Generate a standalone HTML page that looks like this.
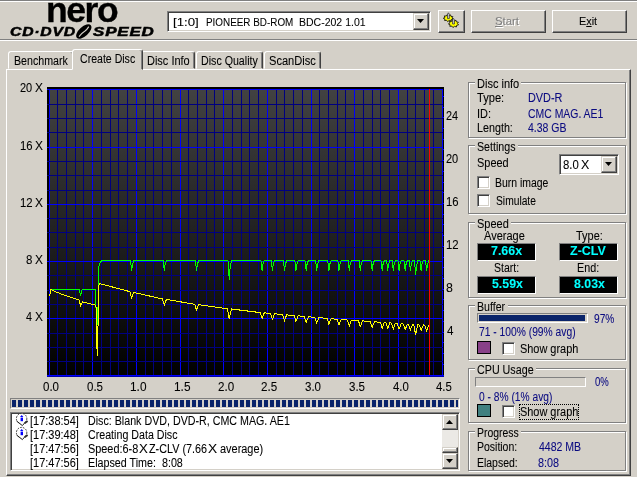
<!DOCTYPE html>
<html><head><meta charset="utf-8"><title>Nero CD-DVD Speed</title>
<style>
html,body{margin:0;padding:0}
body{width:637px;height:477px;overflow:hidden;background:#d4d0c8;position:relative;font-family:"Liberation Sans",sans-serif;font-size:12px;color:#000}
#root{position:absolute;left:0;top:0;width:637px;height:477px;will-change:transform}
.abs{position:absolute;box-sizing:border-box}
.t{position:absolute;white-space:nowrap;line-height:14px;height:14px;transform-origin:0 50%;-webkit-text-stroke:.08px currentColor}
.hl{height:1px}
.grp{border:1px solid #808080;box-shadow:1px 1px 0 #fff, inset 1px 1px 0 #fff}
.btn{border:1px solid;border-color:#fff #404040 #404040 #fff;box-shadow:inset -1px -1px 0 #808080, inset 1px 1px 0 #d4d0c8;background:#d4d0c8}
.sbtn{border:1px solid;border-color:#d4d0c8 #404040 #404040 #d4d0c8;box-shadow:inset -1px -1px 0 #808080, inset 1px 1px 0 #fff;background:#d4d0c8}
.sunk{border:1px solid;border-color:#808080 #fff #fff #808080;box-shadow:inset 1px 1px 0 #404040, inset -1px -1px 0 #d4d0c8;background:#fff}
.led{background:#000;border:1px solid;border-color:#808080 #fff #fff #808080}
.chk{width:13px;height:13px;border:1px solid;border-color:#808080 #fff #fff #808080;box-shadow:inset 1px 1px 0 #404040, inset -1px -1px 0 #d4d0c8;background:#fff}
.tab{border:1px solid;border-color:#fff #404040 transparent #fff;border-radius:3px 3px 0 0;box-shadow:inset -1px 0 0 #808080;background:#d4d0c8}
</style></head><body><div id="root">
<!-- top etched lines -->
<div class="abs hl" style="left:0;top:0;width:637px;background:#808080"></div>
<div class="abs hl" style="left:0;top:1px;width:637px;background:#fff"></div>
<div class="abs hl" style="left:0;top:39px;width:637px;background:#808080"></div>
<div class="abs hl" style="left:0;top:40px;width:637px;background:#fff"></div>

<!-- logo -->
<div class="abs" id="nero" style="left:45.8px;top:-6.5px;height:32px;font-weight:bold;font-size:34.5px;line-height:32px;letter-spacing:-1.4px;white-space:nowrap;-webkit-text-stroke:.3px #000;transform:scaleX(1.03);transform-origin:0 50%">nero</div>
<div class="abs" id="cds1" style="left:9.5px;top:25px;height:14px;font-weight:bold;font-style:italic;font-size:12px;line-height:14px;white-space:nowrap;transform-origin:0 50%;transform:scaleX(1.31);letter-spacing:.6px;-webkit-text-stroke:.5px #000">CD·DVD</div>
<div class="abs" id="cds2" style="left:92.5px;top:25px;height:14px;font-weight:bold;font-style:italic;font-size:12px;line-height:14px;white-space:nowrap;transform-origin:0 50%;transform:scaleX(1.41);letter-spacing:.6px;-webkit-text-stroke:.5px #000">SPEED</div>
<svg class="abs" style="left:74px;top:24px" width="20" height="15" viewBox="0 0 20 15"><ellipse cx="9.8" cy="7.5" rx="9.4" ry="4.7" transform="rotate(-42 9.8 7.5)" fill="#000"/><path d="M5 12.6 Q8.5 8.5 11 7 Q13 5.5 14.8 2.6" stroke="#d4d0c8" stroke-width="1.1" fill="none"/></svg>

<!-- drive combo -->
<div class="abs sunk" style="left:167px;top:11px;width:264px;height:21px"></div>
<div class="abs sbtn" style="left:413px;top:13px;width:16px;height:17px"></div>
<svg class="abs" style="left:417px;top:19px" width="7" height="4"><path d="M0 0h7l-3.5 4z" fill="#000"/></svg>

<!-- icon button -->
<div class="abs btn" style="left:438px;top:10px;width:27px;height:23px"></div>
<svg class="abs" style="left:438px;top:10px" width="27" height="23" viewBox="438 10 27 23">
<path d="M453.08 19.16 L451.17 19.61 L451.01 21.13 L449.10 20.54 L447.67 21.67 L446.66 20.32 L444.63 20.55 L444.98 19.07 L443.31 18.28 L444.86 17.36 L444.32 15.92 L446.35 16.00 L447.19 14.59 L448.75 15.62 L450.58 14.90 L450.94 16.40 L452.91 16.70 L451.90 17.98Z" fill="#ffff00" stroke="#000" stroke-width=".8" stroke-linejoin="round"/>
<path d="M447.5 18.6 V14.2 L448.4 12.8 L449.3 14.2 V18.6Z" fill="#d0d0e0" stroke="#202020" stroke-width=".7"/>
<path d="M458.57 24.85 L456.63 25.33 L456.42 26.98 L454.44 26.33 L452.95 27.57 L451.86 26.10 L449.79 26.35 L450.10 24.75 L448.41 23.89 L449.97 22.90 L449.46 21.34 L451.54 21.43 L452.45 19.90 L454.08 21.02 L455.98 20.23 L456.39 21.87 L458.39 22.19 L457.40 23.57Z" fill="#ffff00" stroke="#000" stroke-width=".8" stroke-linejoin="round"/>
<path d="M452.6 24 V19.8 L453.5 18.4 L454.4 19.8 V24Z" fill="#d0d0e0" stroke="#202020" stroke-width=".7"/>
</svg>

<!-- Start / Exit -->
<div class="abs btn" style="left:471px;top:10px;width:75px;height:23px"></div>
<div class="abs btn" style="left:552px;top:10px;width:75px;height:23px"></div>

<!-- tab pane -->
<div class="abs" style="left:6px;top:69px;width:625px;height:407px;border:1px solid;border-color:#fff #404040 #404040 #fff;box-shadow:inset -1px -1px 0 #808080"></div>
<!-- tabs -->
<div class="abs tab" style="left:8px;top:51px;width:66px;height:18px"></div>
<div class="abs tab" style="left:141px;top:51px;width:54px;height:18px"></div>
<div class="abs tab" style="left:196px;top:51px;width:67px;height:18px"></div>
<div class="abs tab" style="left:264px;top:51px;width:57px;height:18px"></div>
<div class="abs tab" style="left:72px;top:49px;width:71px;height:21px"></div>

<svg class="abs" style="left:47px;top:87px" width="397" height="290" viewBox="47 87 397 290">
<defs><linearGradient id="gb" x1="0" y1="0" x2="0" y2="1"><stop offset="0" stop-color="#424242"/><stop offset="1" stop-color="#000000"/></linearGradient></defs>
<rect x="47" y="87" width="397" height="290" fill="#000"/>
<rect x="49" y="89" width="394" height="287" fill="url(#gb)"/>
<g shape-rendering="crispEdges">
<rect x="57" y="89" width="1" height="287" fill="#000080"/>
<rect x="66" y="89" width="1" height="287" fill="#000080"/>
<rect x="75" y="89" width="1" height="287" fill="#000080"/>
<rect x="83" y="89" width="1" height="287" fill="#000080"/>
<rect x="101" y="89" width="1" height="287" fill="#000080"/>
<rect x="110" y="89" width="1" height="287" fill="#000080"/>
<rect x="118" y="89" width="1" height="287" fill="#000080"/>
<rect x="127" y="89" width="1" height="287" fill="#000080"/>
<rect x="145" y="89" width="1" height="287" fill="#000080"/>
<rect x="153" y="89" width="1" height="287" fill="#000080"/>
<rect x="162" y="89" width="1" height="287" fill="#000080"/>
<rect x="171" y="89" width="1" height="287" fill="#000080"/>
<rect x="188" y="89" width="1" height="287" fill="#000080"/>
<rect x="197" y="89" width="1" height="287" fill="#000080"/>
<rect x="206" y="89" width="1" height="287" fill="#000080"/>
<rect x="214" y="89" width="1" height="287" fill="#000080"/>
<rect x="232" y="89" width="1" height="287" fill="#000080"/>
<rect x="241" y="89" width="1" height="287" fill="#000080"/>
<rect x="249" y="89" width="1" height="287" fill="#000080"/>
<rect x="258" y="89" width="1" height="287" fill="#000080"/>
<rect x="276" y="89" width="1" height="287" fill="#000080"/>
<rect x="284" y="89" width="1" height="287" fill="#000080"/>
<rect x="293" y="89" width="1" height="287" fill="#000080"/>
<rect x="302" y="89" width="1" height="287" fill="#000080"/>
<rect x="319" y="89" width="1" height="287" fill="#000080"/>
<rect x="328" y="89" width="1" height="287" fill="#000080"/>
<rect x="337" y="89" width="1" height="287" fill="#000080"/>
<rect x="345" y="89" width="1" height="287" fill="#000080"/>
<rect x="363" y="89" width="1" height="287" fill="#000080"/>
<rect x="372" y="89" width="1" height="287" fill="#000080"/>
<rect x="380" y="89" width="1" height="287" fill="#000080"/>
<rect x="389" y="89" width="1" height="287" fill="#000080"/>
<rect x="407" y="89" width="1" height="287" fill="#000080"/>
<rect x="415" y="89" width="1" height="287" fill="#000080"/>
<rect x="424" y="89" width="1" height="287" fill="#000080"/>
<rect x="433" y="89" width="1" height="287" fill="#000080"/>
<rect x="49" y="89" width="1" height="287" fill="#0000ff"/>
<rect x="92" y="89" width="1" height="287" fill="#0000ff"/>
<rect x="136" y="89" width="1" height="287" fill="#0000ff"/>
<rect x="180" y="89" width="1" height="287" fill="#0000ff"/>
<rect x="223" y="89" width="1" height="287" fill="#0000ff"/>
<rect x="267" y="89" width="1" height="287" fill="#0000ff"/>
<rect x="311" y="89" width="1" height="287" fill="#0000ff"/>
<rect x="354" y="89" width="1" height="287" fill="#0000ff"/>
<rect x="398" y="89" width="1" height="287" fill="#0000ff"/>
<rect x="442" y="89" width="1" height="287" fill="#0000ff"/>
<rect x="47" y="361" width="396" height="1" fill="#000080"/>
<rect x="47" y="347" width="396" height="1" fill="#000080"/>
<rect x="47" y="333" width="396" height="1" fill="#000080"/>
<rect x="47" y="304" width="396" height="1" fill="#000080"/>
<rect x="47" y="290" width="396" height="1" fill="#000080"/>
<rect x="47" y="275" width="396" height="1" fill="#000080"/>
<rect x="47" y="247" width="396" height="1" fill="#000080"/>
<rect x="47" y="232" width="396" height="1" fill="#000080"/>
<rect x="47" y="218" width="396" height="1" fill="#000080"/>
<rect x="47" y="190" width="396" height="1" fill="#000080"/>
<rect x="47" y="175" width="396" height="1" fill="#000080"/>
<rect x="47" y="161" width="396" height="1" fill="#000080"/>
<rect x="47" y="132" width="396" height="1" fill="#000080"/>
<rect x="47" y="118" width="396" height="1" fill="#000080"/>
<rect x="47" y="104" width="396" height="1" fill="#000080"/>
<rect x="47" y="375" width="396" height="1" fill="#0000ff"/>
<rect x="47" y="318" width="396" height="1" fill="#0000ff"/>
<rect x="47" y="261" width="396" height="1" fill="#0000ff"/>
<rect x="47" y="204" width="396" height="1" fill="#0000ff"/>
<rect x="47" y="147" width="396" height="1" fill="#0000ff"/>
<rect x="47" y="89" width="396" height="1" fill="#0000ff"/>
<rect x="47" y="376" width="397" height="1" fill="#0000b0"/>
<rect x="443" y="375" width="1" height="1" fill="#0000ff"/>
<rect x="443" y="364" width="1" height="1" fill="#0000ff"/>
<rect x="443" y="353" width="1" height="1" fill="#0000ff"/>
<rect x="443" y="342" width="1" height="1" fill="#0000ff"/>
<rect x="443" y="332" width="1" height="1" fill="#0000ff"/>
<rect x="443" y="321" width="1" height="1" fill="#0000ff"/>
<rect x="443" y="310" width="1" height="1" fill="#0000ff"/>
<rect x="443" y="299" width="1" height="1" fill="#0000ff"/>
<rect x="443" y="289" width="1" height="1" fill="#0000ff"/>
<rect x="443" y="278" width="1" height="1" fill="#0000ff"/>
<rect x="443" y="267" width="1" height="1" fill="#0000ff"/>
<rect x="443" y="257" width="1" height="1" fill="#0000ff"/>
<rect x="443" y="246" width="1" height="1" fill="#0000ff"/>
<rect x="443" y="235" width="1" height="1" fill="#0000ff"/>
<rect x="443" y="224" width="1" height="1" fill="#0000ff"/>
<rect x="443" y="214" width="1" height="1" fill="#0000ff"/>
<rect x="443" y="203" width="1" height="1" fill="#0000ff"/>
<rect x="443" y="192" width="1" height="1" fill="#0000ff"/>
<rect x="443" y="182" width="1" height="1" fill="#0000ff"/>
<rect x="443" y="171" width="1" height="1" fill="#0000ff"/>
<rect x="443" y="160" width="1" height="1" fill="#0000ff"/>
<rect x="443" y="149" width="1" height="1" fill="#0000ff"/>
<rect x="443" y="139" width="1" height="1" fill="#0000ff"/>
<rect x="443" y="128" width="1" height="1" fill="#0000ff"/>
<rect x="443" y="117" width="1" height="1" fill="#0000ff"/>
<rect x="443" y="107" width="1" height="1" fill="#0000ff"/>
<rect x="443" y="96" width="1" height="1" fill="#0000ff"/>
<rect x="429" y="89" width="1" height="286" fill="#ff0000"/>
</g>
<polyline fill="none" stroke="#00ff00" stroke-width="1" shape-rendering="crispEdges" points="49.5,296.0 51.0,289.5 79.4,289.5 80.6,296.0 82.1,289.5 95.5,289.5 95.5,302.0 96.5,314.0 97.4,325.0 97.6,312.0 98.5,300.0 98.5,269.0 99.5,264.0 100.5,261.5 102.5,260.5 130.4,260.5 131.1,265.5 131.6,270.5 132.4,264.5 133.8,260.5 163.1,260.5 163.8,265.5 164.3,270.5 165.1,264.5 166.5,260.5 195.3,260.5 196.0,265.5 196.5,270.5 197.3,264.5 198.7,260.5 228.0,260.5 228.7,270.0 229.2,279.5 230.0,269.0 231.4,260.5 260.9,260.5 261.6,265.5 262.1,270.5 262.9,264.5 264.3,260.5 271.2,260.5 271.9,265.5 272.4,270.5 273.2,264.5 274.6,260.5 283.3,260.5 284.0,265.5 284.5,270.5 285.3,264.5 286.7,260.5 294.8,260.5 295.5,265.5 296.0,270.5 296.8,264.5 298.2,260.5 305.0,260.5 305.7,265.5 306.2,270.5 307.0,264.5 308.4,260.5 315.5,260.5 316.2,265.5 316.7,270.5 317.5,264.5 318.9,260.5 327.7,260.5 328.4,265.5 328.9,270.5 329.7,264.5 331.1,260.5 337.8,260.5 338.5,265.5 339.0,270.5 339.8,264.5 341.2,260.5 348.1,260.5 348.8,265.5 349.3,270.5 350.1,264.5 351.5,260.5 359.1,260.5 359.8,265.5 360.3,270.5 361.1,264.5 362.5,260.5 371.0,260.5 371.7,265.5 372.2,270.5 373.0,264.5 374.4,260.5 381.0,260.5 381.7,265.5 382.2,270.5 383.0,264.5 384.4,260.5 386.5,260.5 387.2,265.5 387.7,270.5 388.5,264.5 389.9,260.5 392.1,260.5 392.8,265.5 393.3,270.5 394.1,264.5 395.5,260.5 397.9,260.5 398.6,265.5 399.1,270.5 399.9,264.5 401.3,260.5 404.0,260.5 404.7,265.5 405.2,270.5 406.0,264.5 407.4,260.5 409.2,260.5 409.9,265.5 410.4,270.5 411.2,264.5 412.6,260.5 414.4,260.5 415.1,267.8 415.6,275.0 416.4,266.8 417.8,260.5 419.9,260.5 420.6,265.5 421.1,270.5 421.9,264.5 423.3,260.5 425.4,260.5 426.1,265.5 426.6,270.5 427.4,264.5 428.8,260.5 429.0,260.5"/>
<polyline fill="none" stroke="#ffff00" stroke-width="1" shape-rendering="crispEdges" points="49.5,296.0 51.0,289.6 57.0,292.3 64.0,295.0 79.3,300.2 80.6,306.1 82.5,302.0 95.5,305.2 96.5,308.0 96.5,340.0 97.4,355.5 97.6,330.0 98.5,322.0 98.5,287.0 99.5,283.6 100.5,283.8 129.8,291.6 131.6,297.6 133.8,292.4 162.5,299.0 164.3,304.8 166.5,299.4 194.7,304.3 196.5,310.1 198.7,304.6 227.4,308.8 229.2,319.0 231.4,309.0 260.3,312.6 262.1,318.3 264.3,312.7 270.6,313.6 272.4,319.3 274.6,313.7 282.7,314.7 284.5,320.4 286.7,314.8 294.2,315.8 296.0,321.4 298.2,315.8 304.4,316.7 306.2,322.3 308.4,316.7 314.9,317.5 316.7,323.2 318.9,317.6 327.1,318.5 328.9,324.2 331.1,318.6 337.2,319.4 339.0,325.0 341.2,319.4 347.5,320.1 349.3,325.7 351.5,320.1 358.5,320.9 360.3,326.5 362.5,320.8 370.4,321.7 372.2,327.3 374.4,321.7 380.4,322.4 382.2,328.0 384.4,322.4 385.9,322.8 387.7,328.4 389.9,322.8 391.5,323.2 393.3,328.8 395.5,323.2 397.3,323.6 399.1,329.2 401.3,323.6 403.4,324.0 405.2,329.6 407.4,324.0 408.6,324.3 410.4,329.9 412.6,324.3 413.8,324.7 415.6,334.8 417.8,324.6 419.3,325.0 421.1,330.6 423.3,324.9 424.8,325.3 426.6,331.0 428.8,325.3 429.0,325.6"/>
</svg>

<!-- progress segments -->
<div class="abs" style="left:10px;top:398px;width:450px;height:11px;border:1px solid;border-color:#808080 #fff #fff #808080"></div>
<svg class="abs" style="left:12px;top:400px" width="446" height="8" shape-rendering="crispEdges"><rect x="0" y="0" width="4" height="7" fill="#0a246a"/><rect x="6" y="0" width="4" height="7" fill="#0a246a"/><rect x="12" y="0" width="4" height="7" fill="#0a246a"/><rect x="18" y="0" width="4" height="7" fill="#0a246a"/><rect x="24" y="0" width="4" height="7" fill="#0a246a"/><rect x="30" y="0" width="4" height="7" fill="#0a246a"/><rect x="36" y="0" width="4" height="7" fill="#0a246a"/><rect x="42" y="0" width="4" height="7" fill="#0a246a"/><rect x="48" y="0" width="4" height="7" fill="#0a246a"/><rect x="54" y="0" width="4" height="7" fill="#0a246a"/><rect x="60" y="0" width="4" height="7" fill="#0a246a"/><rect x="66" y="0" width="4" height="7" fill="#0a246a"/><rect x="72" y="0" width="4" height="7" fill="#0a246a"/><rect x="78" y="0" width="4" height="7" fill="#0a246a"/><rect x="84" y="0" width="4" height="7" fill="#0a246a"/><rect x="90" y="0" width="4" height="7" fill="#0a246a"/><rect x="96" y="0" width="4" height="7" fill="#0a246a"/><rect x="102" y="0" width="4" height="7" fill="#0a246a"/><rect x="108" y="0" width="4" height="7" fill="#0a246a"/><rect x="114" y="0" width="4" height="7" fill="#0a246a"/><rect x="120" y="0" width="4" height="7" fill="#0a246a"/><rect x="126" y="0" width="4" height="7" fill="#0a246a"/><rect x="132" y="0" width="4" height="7" fill="#0a246a"/><rect x="138" y="0" width="4" height="7" fill="#0a246a"/><rect x="144" y="0" width="4" height="7" fill="#0a246a"/><rect x="150" y="0" width="4" height="7" fill="#0a246a"/><rect x="156" y="0" width="4" height="7" fill="#0a246a"/><rect x="162" y="0" width="4" height="7" fill="#0a246a"/><rect x="168" y="0" width="4" height="7" fill="#0a246a"/><rect x="174" y="0" width="4" height="7" fill="#0a246a"/><rect x="180" y="0" width="4" height="7" fill="#0a246a"/><rect x="186" y="0" width="4" height="7" fill="#0a246a"/><rect x="192" y="0" width="4" height="7" fill="#0a246a"/><rect x="198" y="0" width="4" height="7" fill="#0a246a"/><rect x="204" y="0" width="4" height="7" fill="#0a246a"/><rect x="210" y="0" width="4" height="7" fill="#0a246a"/><rect x="216" y="0" width="4" height="7" fill="#0a246a"/><rect x="222" y="0" width="4" height="7" fill="#0a246a"/><rect x="228" y="0" width="4" height="7" fill="#0a246a"/><rect x="234" y="0" width="4" height="7" fill="#0a246a"/><rect x="240" y="0" width="4" height="7" fill="#0a246a"/><rect x="246" y="0" width="4" height="7" fill="#0a246a"/><rect x="252" y="0" width="4" height="7" fill="#0a246a"/><rect x="258" y="0" width="4" height="7" fill="#0a246a"/><rect x="264" y="0" width="4" height="7" fill="#0a246a"/><rect x="270" y="0" width="4" height="7" fill="#0a246a"/><rect x="276" y="0" width="4" height="7" fill="#0a246a"/><rect x="282" y="0" width="4" height="7" fill="#0a246a"/><rect x="288" y="0" width="4" height="7" fill="#0a246a"/><rect x="294" y="0" width="4" height="7" fill="#0a246a"/><rect x="300" y="0" width="4" height="7" fill="#0a246a"/><rect x="306" y="0" width="4" height="7" fill="#0a246a"/><rect x="312" y="0" width="4" height="7" fill="#0a246a"/><rect x="318" y="0" width="4" height="7" fill="#0a246a"/><rect x="324" y="0" width="4" height="7" fill="#0a246a"/><rect x="330" y="0" width="4" height="7" fill="#0a246a"/><rect x="336" y="0" width="4" height="7" fill="#0a246a"/><rect x="342" y="0" width="4" height="7" fill="#0a246a"/><rect x="348" y="0" width="4" height="7" fill="#0a246a"/><rect x="354" y="0" width="4" height="7" fill="#0a246a"/><rect x="360" y="0" width="4" height="7" fill="#0a246a"/><rect x="366" y="0" width="4" height="7" fill="#0a246a"/><rect x="372" y="0" width="4" height="7" fill="#0a246a"/><rect x="378" y="0" width="4" height="7" fill="#0a246a"/><rect x="384" y="0" width="4" height="7" fill="#0a246a"/><rect x="390" y="0" width="4" height="7" fill="#0a246a"/><rect x="396" y="0" width="4" height="7" fill="#0a246a"/><rect x="402" y="0" width="4" height="7" fill="#0a246a"/><rect x="408" y="0" width="4" height="7" fill="#0a246a"/><rect x="414" y="0" width="4" height="7" fill="#0a246a"/><rect x="420" y="0" width="4" height="7" fill="#0a246a"/><rect x="426" y="0" width="4" height="7" fill="#0a246a"/><rect x="432" y="0" width="4" height="7" fill="#0a246a"/><rect x="438" y="0" width="4" height="7" fill="#0a246a"/><rect x="444" y="0" width="4" height="7" fill="#0a246a"/></svg>

<!-- log list -->
<div class="abs sunk" style="left:10px;top:412px;width:450px;height:59px"></div>
<svg class="abs" style="left:14px;top:412px" width="16" height="30" viewBox="14 412 16 30">
<g><circle cx="21.6" cy="418.6" r="5.2" fill="#fff" stroke="#303030" stroke-width="1" stroke-dasharray="1.6 1.2"/>
<path d="M16.6 421 L22.4 425.6 L25 422.6" fill="#fff" stroke="#202020" stroke-width="1"/>
<path d="M24.6 423.2 L27.6 421" stroke="#303030" stroke-width="1.8" fill="none"/>
<path d="M20 417 L21.7 415 L23.4 417 Z" fill="#0000ff"/><rect x="20.6" y="417.6" width="2.4" height="3.6" fill="#0000ff"/></g>
<g transform="translate(0 14)"><circle cx="21.6" cy="418.6" r="5.2" fill="#fff" stroke="#303030" stroke-width="1" stroke-dasharray="1.6 1.2"/>
<path d="M16.6 421 L22.4 425.6 L25 422.6" fill="#fff" stroke="#202020" stroke-width="1"/>
<path d="M24.6 423.2 L27.6 421" stroke="#303030" stroke-width="1.8" fill="none"/>
<path d="M20 417 L21.7 415 L23.4 417 Z" fill="#0000ff"/><rect x="20.6" y="417.6" width="2.4" height="3.6" fill="#0000ff"/></g>
</svg>
<!-- scrollbar -->
<div class="abs" style="left:442px;top:414px;width:16px;height:55px;background:#ebe9e5"></div>
<div class="abs sbtn" style="left:442px;top:414px;width:16px;height:16px"></div>
<div class="abs sbtn" style="left:442px;top:447px;width:16px;height:6px"></div>
<div class="abs sbtn" style="left:442px;top:453px;width:16px;height:16px"></div>
<svg class="abs" style="left:446px;top:420px" width="7" height="4"><path d="M0 4h7l-3.5-4z" fill="#000"/></svg>
<svg class="abs" style="left:446px;top:459px" width="7" height="4"><path d="M0 0h7l-3.5 4z" fill="#000"/></svg>

<!-- group boxes -->
<div class="abs" style="left:469px;top:83px;width:158px;height:56px;border:1px solid #fff"></div><div class="abs" style="left:468px;top:82px;width:158px;height:56px;border:1px solid #808080"></div><div class="abs" style="left:475px;top:82px;width:46px;height:2px;background:#d4d0c8"></div>
<div class="abs" style="left:469px;top:146px;width:158px;height:69px;border:1px solid #fff"></div><div class="abs" style="left:468px;top:145px;width:158px;height:69px;border:1px solid #808080"></div><div class="abs" style="left:475px;top:145px;width:43px;height:2px;background:#d4d0c8"></div>
<div class="abs" style="left:469px;top:223px;width:158px;height:76px;border:1px solid #fff"></div><div class="abs" style="left:468px;top:222px;width:158px;height:76px;border:1px solid #808080"></div><div class="abs" style="left:475px;top:222px;width:36px;height:2px;background:#d4d0c8"></div>
<div class="abs" style="left:469px;top:306px;width:158px;height:55px;border:1px solid #fff"></div><div class="abs" style="left:468px;top:305px;width:158px;height:55px;border:1px solid #808080"></div><div class="abs" style="left:475px;top:305px;width:33px;height:2px;background:#d4d0c8"></div>
<div class="abs" style="left:469px;top:369px;width:158px;height:55px;border:1px solid #fff"></div><div class="abs" style="left:468px;top:368px;width:158px;height:55px;border:1px solid #808080"></div><div class="abs" style="left:475px;top:368px;width:61px;height:2px;background:#d4d0c8"></div>
<div class="abs" style="left:469px;top:432px;width:158px;height:40px;border:1px solid #fff"></div><div class="abs" style="left:468px;top:431px;width:158px;height:40px;border:1px solid #808080"></div><div class="abs" style="left:475px;top:431px;width:46px;height:2px;background:#d4d0c8"></div>

<div class="abs sunk" style="left:559px;top:154px;width:60px;height:21px"></div>
<div class="abs sbtn" style="left:601px;top:156px;width:16px;height:17px"></div>
<svg class="abs" style="left:605px;top:162px" width="7" height="4"><path d="M0 0h7l-3.5 4z" fill="#000"/></svg>
<div class="abs chk" style="left:477px;top:176px"></div><div class="abs chk" style="left:477px;top:194px"></div>
<div class="abs led" style="left:477px;top:243px;width:59px;height:18px"></div><div class="abs led" style="left:559px;top:243px;width:59px;height:18px"></div><div class="abs led" style="left:477px;top:276px;width:59px;height:18px"></div><div class="abs led" style="left:559px;top:276px;width:59px;height:18px"></div>

<div class="abs" style="left:477px;top:313px;width:111px;height:10px;border:1px solid;border-color:#808080 #fff #fff #808080"></div>
<div class="abs" style="left:479px;top:315px;width:106px;height:6px;background:#0a246a"></div>
<div class="abs" style="left:477px;top:341px;width:14px;height:13px;background:#884088;border:1px solid #000"></div>
<div class="abs chk" style="left:502px;top:342px"></div>
<div class="abs" style="left:475px;top:377px;width:111px;height:10px;border:1px solid;border-color:#808080 #fff #fff #808080"></div>
<div class="abs" style="left:477px;top:404px;width:14px;height:13px;background:#408080;border:1px solid #000"></div>
<div class="abs chk" style="left:502px;top:405px"></div>
<div class="abs" style="left:519px;top:404px;width:60px;height:16px;border:1px dotted #000"></div>

<!-- all text -->
<div class="t" style="left:13.85px;top:54px;transform:scaleX(0.8886)">Benchmark </div>
<div class="t" style="left:80.07px;top:52px;transform:scaleX(0.8803)">Create Disc </div>
<div class="t" style="left:147.02px;top:54px;transform:scaleX(0.9151)">Disc Info </div>
<div class="t" style="left:200.55px;top:54px;transform:scaleX(0.8873)">Disc Quality </div>
<div class="t" style="left:268.70px;top:54px;transform:scaleX(0.9246)">ScanDisc </div>
<div class="t" style="left:172.87px;top:15px;transform:scaleX(1.1514);font-size:11.5px">[1:0] </div>
<div class="t" style="left:206.21px;top:15px;transform:scaleX(0.8595);font-size:11.5px">PIONEER BD-ROM </div>
<div class="t" style="left:299.16px;top:15px;transform:scaleX(0.9137);font-size:11.5px">BDC-202 1.01 </div>
<div class="t" style="left:495.29px;top:14px;transform:scaleX(0.9878);color:#808080;font-size:11.5px;text-shadow:1.1px 1px 0 #fff"><u>S</u>tart </div>
<div class="t" style="left:579.13px;top:14px;transform:scaleX(0.9411);font-size:11.5px">E<u>x</u>it </div>
<div class="t" style="left:20.25px;top:81px;transform:scaleX(0.9150)">20 </div>
<div class="t" style="left:34.60px;top:81px;transform:scaleX(0.9946)">X </div>
<div class="t" style="left:19.95px;top:139px;transform:scaleX(0.9428)">16 </div>
<div class="t" style="left:34.60px;top:139px;transform:scaleX(0.9946)">X </div>
<div class="t" style="left:19.95px;top:196px;transform:scaleX(0.9475)">12 </div>
<div class="t" style="left:34.60px;top:196px;transform:scaleX(0.9946)">X </div>
<div class="t" style="left:26.08px;top:253px;transform:scaleX(0.9574)">8 </div>
<div class="t" style="left:34.60px;top:253px;transform:scaleX(0.9946)">X </div>
<div class="t" style="left:26.33px;top:310px;transform:scaleX(0.9000)">4 </div>
<div class="t" style="left:34.60px;top:310px;transform:scaleX(0.9946)">X </div>
<div class="t" style="left:446.26px;top:109px;transform:scaleX(0.9061)">24 </div>
<div class="t" style="left:446.25px;top:152px;transform:scaleX(0.9150)">20 </div>
<div class="t" style="left:445.95px;top:195px;transform:scaleX(0.9428)">16 </div>
<div class="t" style="left:445.95px;top:238px;transform:scaleX(0.9475)">12 </div>
<div class="t" style="left:446.24px;top:281px;transform:scaleX(1.0284)">8 </div>
<div class="t" style="left:446.51px;top:324px;transform:scaleX(0.9667)">4 </div>
<div class="t" style="left:43.24px;top:380px;transform:scaleX(0.9606)">0.0 </div>
<div class="t" style="left:86.89px;top:380px;transform:scaleX(0.9606)">0.5 </div>
<div class="t" style="left:130.11px;top:380px;transform:scaleX(0.9869)">1.0 </div>
<div class="t" style="left:173.76px;top:380px;transform:scaleX(0.9869)">1.5 </div>
<div class="t" style="left:217.72px;top:380px;transform:scaleX(0.9679)">2.0 </div>
<div class="t" style="left:261.37px;top:380px;transform:scaleX(0.9679)">2.5 </div>
<div class="t" style="left:305.14px;top:380px;transform:scaleX(0.9606)">3.0 </div>
<div class="t" style="left:348.79px;top:380px;transform:scaleX(0.9606)">3.5 </div>
<div class="t" style="left:392.62px;top:380px;transform:scaleX(0.9497)">4.0 </div>
<div class="t" style="left:436.27px;top:380px;transform:scaleX(0.9497)">4.5 </div>
<div class="t" style="left:30.03px;top:414px;transform:scaleX(0.9156)">[17:38:54] </div>
<div class="t" style="left:87.64px;top:414px;transform:scaleX(0.8906)">Disc: Blank DVD, DVD-R, CMC MAG. AE1 </div>
<div class="t" style="left:30.03px;top:428px;transform:scaleX(0.9156)">[17:39:48] </div>
<div class="t" style="left:87.97px;top:428px;transform:scaleX(0.8890)">Creating Data Disc </div>
<div class="t" style="left:30.03px;top:442px;transform:scaleX(0.9156)">[17:47:56] </div>
<div class="t" style="left:88.01px;top:442px;transform:scaleX(0.9069)">Speed:6-8 </div>
<div class="t" style="left:138.97px;top:442px;transform:scaleX(1.1022)">X </div>
<div class="t" style="left:149.48px;top:442px;transform:scaleX(0.9002)">Z-CLV (7.66 </div>
<div class="t" style="left:207.86px;top:442px;transform:scaleX(1.1425)">X </div>
<div class="t" style="left:219.51px;top:442px;transform:scaleX(0.9115)">average) </div>
<div class="t" style="left:30.03px;top:456px;transform:scaleX(0.9156)">[17:47:56] </div>
<div class="t" style="left:87.64px;top:456px;transform:scaleX(0.8941)">Elapsed Time:&nbsp; 8:08 </div>
<div class="t" style="left:476.72px;top:77px;transform:scaleX(0.9175)">Disc info </div>
<div class="t" style="left:477.32px;top:91px;transform:scaleX(0.9263)">Type: </div>
<div class="t" style="left:527.83px;top:91px;transform:scaleX(0.9073);color:#0a0a80">DVD-R </div>
<div class="t" style="left:477.01px;top:107px;transform:scaleX(0.9132)">ID: </div>
<div class="t" style="left:528.18px;top:107px;transform:scaleX(0.8690);color:#0a0a80">CMC MAG. AE1 </div>
<div class="t" style="left:477.34px;top:121px;transform:scaleX(0.8952)">Length: </div>
<div class="t" style="left:528.44px;top:121px;transform:scaleX(0.8751);color:#0a0a80">4.38 GB </div>
<div class="t" style="left:477.12px;top:140px;transform:scaleX(0.8887)">Settings </div>
<div class="t" style="left:477.11px;top:156px;transform:scaleX(0.9113)">Speed </div>
<div class="t" style="left:563.09px;top:158px;transform:scaleX(0.9451)">8.0 </div>
<div class="t" style="left:580.59px;top:158px;transform:scaleX(1.0349)">X </div>
<div class="t" style="left:495.06px;top:176px;transform:scaleX(0.8701)">Burn image </div>
<div class="t" style="left:495.54px;top:194px;transform:scaleX(0.8553)">Simulate </div>
<div class="t" style="left:477.10px;top:217px;transform:scaleX(0.9173)">Speed </div>
<div class="t" style="left:484.15px;top:229px;transform:scaleX(0.9166)">Average </div>
<div class="t" style="left:575.73px;top:229px;transform:scaleX(0.9120)">Type: </div>
<div class="t" style="left:491.44px;top:244px;transform:scaleX(1.0361);color:#00ffff;font-weight:bold">7.66x </div>
<div class="t" style="left:570.43px;top:244px;transform:scaleX(1.0406);color:#00ffff;font-weight:bold">Z-CLV </div>
<div class="t" style="left:494.43px;top:261px;transform:scaleX(0.8741)">Start: </div>
<div class="t" style="left:577.14px;top:261px;transform:scaleX(0.8974)">End: </div>
<div class="t" style="left:491.63px;top:277px;transform:scaleX(1.0298);color:#00ffff;font-weight:bold">5.59x </div>
<div class="t" style="left:573.63px;top:277px;transform:scaleX(1.0298);color:#00ffff;font-weight:bold">8.03x </div>
<div class="t" style="left:477.15px;top:300px;transform:scaleX(0.8824)">Buffer </div>
<div class="t" style="left:594.44px;top:312px;transform:scaleX(0.8464);color:#0a0a80">97% </div>
<div class="t" style="left:479.09px;top:325px;transform:scaleX(0.8567);color:#0a0a80">71 - 100% (99% avg) </div>
<div class="t" style="left:520.01px;top:342px;transform:scaleX(0.9107)">Show graph </div>
<div class="t" style="left:477.26px;top:363px;transform:scaleX(0.8936)">CPU Usage </div>
<div class="t" style="left:594.52px;top:375px;transform:scaleX(0.7968);color:#0a0a80">0% </div>
<div class="t" style="left:478.79px;top:390px;transform:scaleX(0.8528);color:#0a0a80">0 - 8% (1% avg) </div>
<div class="t" style="left:520.01px;top:405px;transform:scaleX(0.9107)">Show graph </div>
<div class="t" style="left:477.17px;top:426px;transform:scaleX(0.8687)">Progress </div>
<div class="t" style="left:477.16px;top:440px;transform:scaleX(0.8731)">Position: </div>
<div class="t" style="left:538.64px;top:440px;transform:scaleX(0.8769);color:#0a0a80">4482 MB </div>
<div class="t" style="left:477.16px;top:456px;transform:scaleX(0.8714)">Elapsed: </div>
<div class="t" style="left:538.41px;top:456px;transform:scaleX(0.9005);color:#0a0a80">8:08 </div>
</div></body></html>
